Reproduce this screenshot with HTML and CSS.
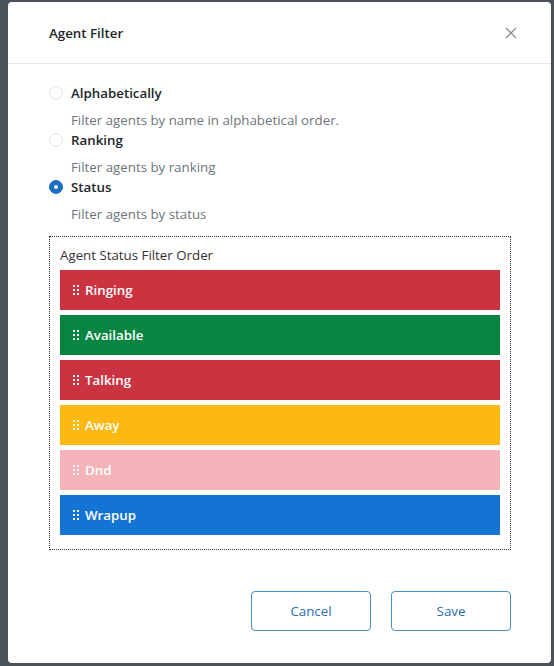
FILE: index.html
```html
<!DOCTYPE html>
<html>
<head>
<meta charset="utf-8">
<link rel="stylesheet" href="styles.css">
</head>
<body>
<div class="modal">
  <div class="modal-header">
    <div class="modal-title">Agent Filter</div>
    <svg class="close" width="12" height="12" viewBox="0 0 12 12"><path d="M1 1L11 11M11 1L1 11" stroke="#8b9098" stroke-width="1.3" fill="none"/></svg>
  </div>
  <div class="modal-body">
    <div class="option">
      <div class="option-row"><span class="radio"></span><span class="option-label">Alphabetically</span></div>
      <div class="option-desc">Filter agents by name in alphabetical order.</div>
    </div>
    <div class="option">
      <div class="option-row"><span class="radio"></span><span class="option-label">Ranking</span></div>
      <div class="option-desc">Filter agents by ranking</div>
    </div>
    <div class="option">
      <div class="option-row"><span class="radio checked"></span><span class="option-label">Status</span></div>
      <div class="option-desc">Filter agents by status</div>
    </div>
    <div class="order-box">
      <div class="order-title">Agent Status Filter Order</div>
      <div class="order-list">
        <div class="status-bar ringing"><svg class="handle" width="6" height="12" viewBox="0 0 6 12"><rect x="0" y="1" width="2" height="2"/><rect x="4" y="1" width="2" height="2"/><rect x="0" y="5" width="2" height="2"/><rect x="4" y="5" width="2" height="2"/><rect x="0" y="9" width="2" height="2"/><rect x="4" y="9" width="2" height="2"/></svg><span>Ringing</span></div>
        <div class="status-bar available"><svg class="handle" width="6" height="12" viewBox="0 0 6 12"><rect x="0" y="1" width="2" height="2"/><rect x="4" y="1" width="2" height="2"/><rect x="0" y="5" width="2" height="2"/><rect x="4" y="5" width="2" height="2"/><rect x="0" y="9" width="2" height="2"/><rect x="4" y="9" width="2" height="2"/></svg><span>Available</span></div>
        <div class="status-bar talking"><svg class="handle" width="6" height="12" viewBox="0 0 6 12"><rect x="0" y="1" width="2" height="2"/><rect x="4" y="1" width="2" height="2"/><rect x="0" y="5" width="2" height="2"/><rect x="4" y="5" width="2" height="2"/><rect x="0" y="9" width="2" height="2"/><rect x="4" y="9" width="2" height="2"/></svg><span>Talking</span></div>
        <div class="status-bar away"><svg class="handle" width="6" height="12" viewBox="0 0 6 12"><rect x="0" y="1" width="2" height="2"/><rect x="4" y="1" width="2" height="2"/><rect x="0" y="5" width="2" height="2"/><rect x="4" y="5" width="2" height="2"/><rect x="0" y="9" width="2" height="2"/><rect x="4" y="9" width="2" height="2"/></svg><span>Away</span></div>
        <div class="status-bar dnd"><svg class="handle" width="6" height="12" viewBox="0 0 6 12"><rect x="0" y="1" width="2" height="2"/><rect x="4" y="1" width="2" height="2"/><rect x="0" y="5" width="2" height="2"/><rect x="4" y="5" width="2" height="2"/><rect x="0" y="9" width="2" height="2"/><rect x="4" y="9" width="2" height="2"/></svg><span>Dnd</span></div>
        <div class="status-bar wrapup"><svg class="handle" width="6" height="12" viewBox="0 0 6 12"><rect x="0" y="1" width="2" height="2"/><rect x="4" y="1" width="2" height="2"/><rect x="0" y="5" width="2" height="2"/><rect x="4" y="5" width="2" height="2"/><rect x="0" y="9" width="2" height="2"/><rect x="4" y="9" width="2" height="2"/></svg><span>Wrapup</span></div>
      </div>
    </div>
  </div>
  <div class="modal-footer">
    <button class="btn">Cancel</button>
    <button class="btn">Save</button>
  </div>
</div>
</body>
</html>
```
FILE: styles.css
```css
html, body {
  margin: 0;
  padding: 0;
}
body {
  background: #4a5158;
  width: 554px;
  height: 666px;
  overflow: hidden;
  font-family: "Open Sans", "Noto Sans", sans-serif;
  font-size: 13.3px;
  color: #212529;
}
.modal {
  margin: 2px 0 0 8px;
  width: 543px;
  height: 661px;
  background: #fff;
  border-radius: 4px;
  display: flex;
  flex-direction: column;
}
.modal-header {
  height: 61px;
  border-bottom: 1px solid #e6e8eb;
  display: flex;
  align-items: center;
  justify-content: space-between;
  padding: 0 34px 0 41px;
}
.modal-title {
  font-weight: 600;
  font-size: 13.3px;
  color: #212529;
}
.close {
  display: block;
}
.modal-body {
  padding: 19px 40px 0 41px;
}
.option-row {
  display: flex;
  align-items: center;
  height: 20px;
}
.radio {
  width: 14px;
  height: 14px;
  box-sizing: border-box;
  border: 1px solid #dfe2e6;
  border-radius: 50%;
  margin-right: 8px;
  background: #fff;
}
.radio.checked {
  background: #1a6fc4;
  border-color: #1a6fc4;
  display: flex;
  align-items: center;
  justify-content: center;
}
.radio.checked::after {
  content: "";
  width: 4px;
  height: 4px;
  border-radius: 50%;
  background: #fff;
}
.option-label {
  font-weight: 600;
  line-height: 20px;
}
.option-desc {
  margin: 7px 0 0 22px;
  line-height: 20px;
  color: #6c757d;
}
.order-box {
  margin-top: 12px;
  border: 1px dotted #333;
  padding: 8px 10px 14px 10px;
}
.order-title {
  line-height: 20px;
  color: #333;
}
.order-list {
  margin-top: 5px;
  display: flex;
  flex-direction: column;
  gap: 5px;
}
.status-bar {
  height: 40px;
  display: flex;
  align-items: center;
  padding-left: 13px;
  color: #fff;
  font-weight: 600;
}
.handle {
  fill: #fff;
  margin-right: 6px;
}
.ringing, .talking { background: #cc3340; }
.available { background: #078541; }
.away { background: #fdb913; }
.dnd { background: #f5b4ba; }
.wrapup { background: #1474d4; }
.modal-footer {
  margin-top: 41px;
  display: flex;
  justify-content: flex-end;
  gap: 20px;
  padding-right: 40px;
}
.btn {
  width: 120px;
  height: 40px;
  background: #fff;
  border: 1px solid #4b8ec8;
  border-radius: 4px;
  color: #2a6db0;
  font-family: "Open Sans", "Noto Sans", sans-serif;
  font-size: 13.3px;
}
```
